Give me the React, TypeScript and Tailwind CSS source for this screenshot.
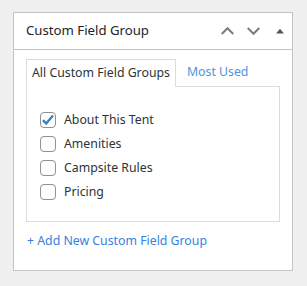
import React from 'react';

const groups = [
  { label: 'About This Tent', checked: true },
  { label: 'Amenities', checked: false },
  { label: 'Campsite Rules', checked: false },
  { label: 'Pricing', checked: false },
];

const Checkbox: React.FC<{ checked: boolean }> = ({ checked }) => (
  <span className="w-4 h-4 shrink-0 rounded-[4px] border border-[#8c8f94] bg-white flex items-center justify-center">
    {checked && (
      <svg width="14" height="14" viewBox="0 0 14 14" fill="none">
        <path d="M2 7.2l3.2 3.3L12 2.5" stroke="#3582c4" strokeWidth="2.4" strokeLinejoin="miter" />
      </svg>
    )}
  </span>
);

export default function App() {
  return (
    <div className="min-h-[286px] bg-[#f0f0f1] pt-3 px-[13px] pb-3" style={{ fontFamily: '"Segoe UI", "Noto Sans", sans-serif' }}>
      <div className="w-[280px] bg-white border border-[#c3c4c7]">
        <div className="h-[37px] flex items-center justify-between pl-3 pr-[8px] border-b border-[#c3c4c7]">
          <h2 className="text-[13.2px] text-[#1d2327]">Custom Field Group</h2>
          <div className="flex items-center gap-[13px]">
            <svg width="13" height="8" viewBox="0 0 13 8" fill="none">
              <path d="M0.7 7l5.8-5.8L12.3 7" stroke="#787c82" strokeWidth="2" />
            </svg>
            <svg width="13" height="8" viewBox="0 0 13 8" fill="none">
              <path d="M0.7 1l5.8 5.8L12.3 1" stroke="#787c82" strokeWidth="2" />
            </svg>
            <svg width="8" height="6" viewBox="0 0 8 6" className="ml-[3px]">
              <path d="M0 5.5L4 0.8l4 4.7z" fill="#50575e" />
            </svg>
          </div>
        </div>
        <div className="px-3 pt-[8px] pb-[20px]">
          <div className="flex items-end">
            <div className="h-[28px] px-[5px] flex items-center border border-b-0 border-[#dcdcde] bg-white relative top-px text-[12.3px] text-[#2c3338]">
              All Custom Field Groups
            </div>
            <a className="ml-[11px] h-[28px] flex items-center text-[12.3px] text-[#4f94e0]">Most Used</a>
          </div>
          <div className="w-[254px] h-[136px] border border-[#dcdcde] pt-[25px] pl-[13px] flex flex-col gap-[8px]">
            {groups.map((g) => (
              <label key={g.label} className="flex items-center gap-[8px] h-4 text-[12.3px] text-[#2c3338]">
                <Checkbox checked={g.checked} />
                {g.label}
              </label>
            ))}
          </div>
          <a className="block mt-[10px] ml-px text-[12.3px] text-[#3582e0]">+ Add New Custom Field Group</a>
        </div>
      </div>
    </div>
  );
}
